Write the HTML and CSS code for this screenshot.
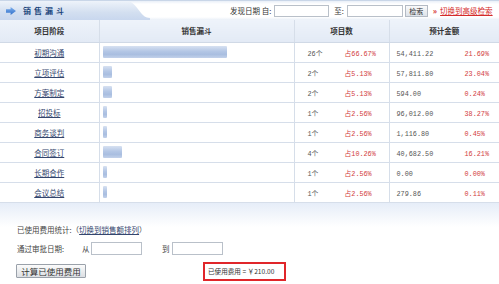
FILE: index.html
```html
<!DOCTYPE html>
<html lang="zh">
<head>
<meta charset="utf-8">
<title>销售漏斗</title>
<link rel="stylesheet" href="styles.css">
</head>
<body>
<div class="page">
  <div class="topbar">
    <div class="tab">
      <svg class="tab-icon" width="10" height="8" viewBox="0 0 10 8"><defs><linearGradient id="ag" x1="0" y1="0" x2="0" y2="1"><stop offset="0" stop-color="#7fb0ee"/><stop offset="1" stop-color="#2f6fc9"/></linearGradient></defs><path d="M0 2.3 H4.6 V0 L10 4 L4.6 8 V5.7 H0 Z" fill="url(#ag)"/></svg>
      <span class="tab-title">销售漏斗</span>
    </div>
    <div class="search">
      <span class="lbl">发现日期 自:</span>
      <input class="in in-a" type="text">
      <span class="lbl lbl-to">至:</span>
      <input class="in in-b" type="text">
      <button class="btn-search" type="button">检索</button>
      <span class="raquo">»</span>
      <a class="adv" href="#">切换到高级检索</a>
    </div>
  </div>

  <table class="funnel">
    <colgroup><col class="c1"><col class="c2"><col class="c3"><col class="c4"></colgroup>
    <thead>
      <tr><th>项目阶段</th><th>销售漏斗</th><th>项目数</th><th>预计金额</th></tr>
    </thead>
    <tbody>
      <tr><td class="stage"><a href="#">初期沟通</a></td><td class="bar-cell"><div class="bar" style="width:124px"></div></td><td class="num"><span class="count">26个</span><span class="red">占66.67%</span></td><td class="money"><span class="amt">54,411.22</span><span class="red">21.69%</span></td></tr>
      <tr><td class="stage"><a href="#">立项评估</a></td><td class="bar-cell"><div class="bar" style="width:9px"></div></td><td class="num"><span class="count">2个</span><span class="red">占5.13%</span></td><td class="money"><span class="amt">57,811.80</span><span class="red">23.04%</span></td></tr>
      <tr><td class="stage"><a href="#">方案制定</a></td><td class="bar-cell"><div class="bar" style="width:9px"></div></td><td class="num"><span class="count">2个</span><span class="red">占5.13%</span></td><td class="money"><span class="amt">594.00</span><span class="red">0.24%</span></td></tr>
      <tr><td class="stage"><a href="#">招投标</a></td><td class="bar-cell"><div class="bar" style="width:4px"></div></td><td class="num"><span class="count">1个</span><span class="red">占2.56%</span></td><td class="money"><span class="amt">96,012.00</span><span class="red">38.27%</span></td></tr>
      <tr><td class="stage"><a href="#">商务谈判</a></td><td class="bar-cell"><div class="bar" style="width:4px"></div></td><td class="num"><span class="count">1个</span><span class="red">占2.56%</span></td><td class="money"><span class="amt">1,116.80</span><span class="red">0.45%</span></td></tr>
      <tr><td class="stage"><a href="#">合同签订</a></td><td class="bar-cell"><div class="bar" style="width:19px"></div></td><td class="num"><span class="count">4个</span><span class="red">占10.26%</span></td><td class="money"><span class="amt">40,682.50</span><span class="red">16.21%</span></td></tr>
      <tr><td class="stage"><a href="#">长期合作</a></td><td class="bar-cell"><div class="bar" style="width:4px"></div></td><td class="num"><span class="count">1个</span><span class="red">占2.56%</span></td><td class="money"><span class="amt">0.00</span><span class="red">0.00%</span></td></tr>
      <tr><td class="stage"><a href="#">会议总结</a></td><td class="bar-cell"><div class="bar" style="width:4px"></div></td><td class="num"><span class="count">1个</span><span class="red">占2.56%</span></td><td class="money"><span class="amt">279.86</span><span class="red">0.11%</span></td></tr>
    </tbody>
  </table>

  <div class="bottom">
    <div class="line line-1">已使用费用统计:（<a href="#">切换到销售额排列</a>）</div>
    <div class="line line-2">
      <span class="date-lbl">通过审批日期:</span>
      <span class="from">从</span>
      <input class="in in-date" type="text">
      <span class="to">到</span>
      <input class="in in-date" type="text">
    </div>
    <div class="line line-3">
      <button class="btn-calc" type="button">计算已使用费用</button>
      <div class="result">已使用费用 = ￥210.00</div>
    </div>
  </div>
</div>
</body>
</html>
```

FILE: styles.css
```css
* { box-sizing: border-box; }
html, body { margin: 0; padding: 0; background: #fff; }
body {
  font-family: "Noto Sans CJK SC", "DejaVu Sans", sans-serif;
  font-size: 7.5px;
  color: #444;
  width: 499px;
  height: 284px;
  overflow: hidden;
}
.page { width: 499px; }

/* top bar */
.topbar {
  display: flex;
  align-items: center;
  height: 20px;
  background: linear-gradient(#e9eff8 0, #ffffff 3px, #ffffff 16px, #e3ebf6 20px);
  border-top: 1px solid #c9d6e8;
}
.tab {
  width: 150px;
  height: 19px;
  display: flex;
  align-items: center;
  padding-left: 6px;
  background: linear-gradient(#eef3fa, #d3dff0 60%, #c8d7ee);
  clip-path: path('M0 0 H126 C138 0 139 17 150 17 V19 H0 Z');
}
.tab-icon { flex: none; display: block; }
.tab-title {
  margin-left: 7px;
  font-weight: bold;
  font-size: 8px;
  letter-spacing: 3px;
  color: #1d477d;
}
.search {
  display: flex;
  align-items: center;
  margin-left: 80px;
  white-space: nowrap;
  color: #333;
}
.in {
  height: 12px;
  border: 1px solid #b9c0c9;
  background: #fff;
  padding: 0;
  margin: 0;
}
.in-a { width: 55px; margin-left: 3px; }
.lbl-to { margin-left: 5px; }
.in-b { width: 56px; margin-left: 3px; }
.btn-search {
  height: 12px;
  width: 23px;
  margin-left: 2px;
  padding: 0;
  font: inherit;
  font-size: 7px;
  color: #333;
  border: 1px solid #b3bac4;
  background: linear-gradient(#fafafa, #dde3ea);
}
.raquo { color: #d42a2a; font-weight: bold; margin-left: 5px; font-size: 8px; }
.adv { color: #d42a2a; margin-left: 3px; text-decoration: underline; }

/* table */
.funnel {
  width: 499px;
  border-collapse: collapse;
  table-layout: fixed;
}
.c1 { width: 99px; }
.c2 { width: 195px; }
.c3 { width: 95px; }
.c4 { width: 110px; }
.funnel th {
  height: 22px;
  padding: 0;
  font-weight: bold;
  color: #333;
  background: linear-gradient(#eef3fa, #e3eaf5);
  border-bottom: 1px solid #d0d9e6;
  border-left: 1px solid #d6dee9;
}
.funnel td {
  height: 20px;
  padding: 0;
  border-bottom: 1px solid #d6deea;
  border-left: 1px solid #d6dee9;
  white-space: nowrap;
}
.funnel th:first-child, .funnel td:first-child { border-left: 0; }
.stage { text-align: center; }
.stage a { color: #34466e; text-decoration: underline; }
.bar-cell { padding-left: 3px !important; }
.bar {
  height: 12px;
  background: linear-gradient(#d7e1f1, #b3c6e5 45%, #a9bee0 70%, #c2d1ea);
  border-radius: 1px;
}
.num { padding-left: 13px !important; }
.money { padding-left: 7px !important; }
.count, .amt, .red { font-family: "Liberation Mono", "Noto Sans CJK SC", monospace; font-size: 6.8px; }
.count { display: inline-block; width: 37px; color: #555; }
.amt { display: inline-block; width: 68px; color: #555; }
.red { color: #d23c3c; }

/* bottom */
.bottom {
  padding: 21px 0 0 16px;
  background: linear-gradient(#e6edf8, #ffffff 24px) no-repeat;
  color: #444;
}
.line { display: flex; align-items: center; }
.line-1 { height: 12px; padding-left: 1px; }
.line-1 a { color: #34466e; text-decoration: underline; }
.line-2 { height: 13px; margin-top: 6px; padding-left: 1px; }
.date-lbl { width: 65px; }
.from { width: 9px; }
.in-date { width: 51px; height: 13px; }
.to { margin-left: 20px; width: 10px; }
.line-3 { height: 19px; margin-top: 7px; }
.btn-calc {
  width: 70px;
  height: 14px;
  padding: 0;
  font: inherit;
  font-size: 8.5px;
  color: #333;
  border: 1px solid #9aa1aa;
  border-radius: 1px;
  background: linear-gradient(#fbfbfb, #dcdfe3);
}
.result {
  margin-left: 117px;
  width: 83px;
  height: 19px;
  border: 2px solid #e0262a;
  display: flex;
  align-items: center;
  padding-left: 3px;
  font-size: 6.6px;
  color: #333;
  white-space: nowrap;
}
```
